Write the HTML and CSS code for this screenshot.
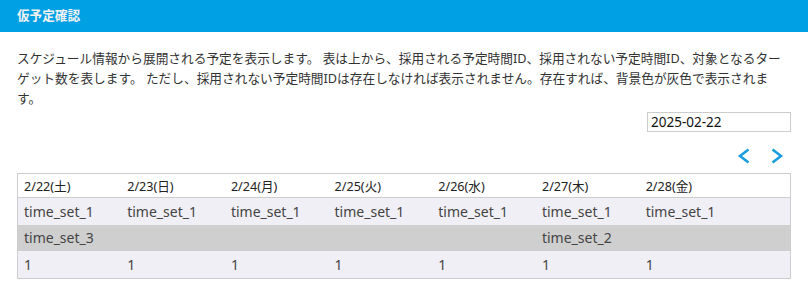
FILE: index.html
```html
<!DOCTYPE html>
<html lang="ja">
  <head>
    <meta charset="UTF-8" />
    <meta name="viewport" content="width=device-width, initial-scale=1.0" />
    <title>仮予定確認</title>
    <link rel="stylesheet" href="styles.css">
  </head>
  <body>
    <div class="panel-header">仮予定確認</div>
    <div class="panel-body">
      <p class="description">スケジュール情報から展開される予定を表示します。 表は上から、採用される予定時間ID、採用されない予定時間ID、対象となるターゲット数を表します。 ただし、採用されない予定時間IDは存在しなければ表示されません。存在すれば、背景色が灰色で表示されます。</p>
      <div class="date-row">
        <input class="date-input" type="text" value="2025-02-22" />
      </div>
      <div class="nav-row">
        <button class="nav-btn" aria-label="前へ">
          <svg width="24" height="24" viewBox="0 0 24 24"><polyline points="16.5,5.5 8,12 16.5,18.5" /></svg>
        </button>
        <button class="nav-btn" aria-label="次へ">
          <svg width="24" height="24" viewBox="0 0 24 24"><polyline points="7.5,5.5 16,12 7.5,18.5" /></svg>
        </button>
      </div>
      <table class="schedule-table">
        <colgroup>
          <col class="day-col" />
          <col class="day-col" />
          <col class="day-col" />
          <col class="day-col" />
          <col class="day-col" />
          <col class="day-col" />
          <col class="day-col" />
          <col />
        </colgroup>
        <thead>
          <tr>
            <th>2/22(土)</th>
            <th>2/23(日)</th>
            <th>2/24(月)</th>
            <th>2/25(火)</th>
            <th>2/26(水)</th>
            <th>2/27(木)</th>
            <th>2/28(金)</th>
            <th></th>
          </tr>
        </thead>
        <tbody>
          <tr>
            <td>time_set_1</td>
            <td>time_set_1</td>
            <td>time_set_1</td>
            <td>time_set_1</td>
            <td>time_set_1</td>
            <td>time_set_1</td>
            <td>time_set_1</td>
            <td></td>
          </tr>
          <tr class="unused-row">
            <td>time_set_3</td>
            <td></td>
            <td></td>
            <td></td>
            <td></td>
            <td>time_set_2</td>
            <td></td>
            <td></td>
          </tr>
          <tr>
            <td>1</td>
            <td>1</td>
            <td>1</td>
            <td>1</td>
            <td>1</td>
            <td>1</td>
            <td>1</td>
            <td></td>
          </tr>
        </tbody>
      </table>
    </div>
  </body>
</html>
```

FILE: styles.css
```css
body {
  margin: 0;
  font-family: "Noto Sans", "Noto Sans CJK JP", sans-serif;
  color: #333;
  background-color: #fff;
}
.panel-header {
  height: 32px;
  padding-left: 17px;
  background-color: #00a0e4;
  color: #f2f2f2;
  font-size: 12.6px;
  font-weight: bold;
  line-height: 32px;
}
.panel-body {
  padding: 0 17px;
}
.description {
  margin: 16px 0 0;
  font-size: 12.7px;
  line-height: 20px;
  line-break: strict;
}
.date-row {
  display: flex;
  justify-content: flex-end;
  margin-top: 4px;
}
.date-input {
  box-sizing: border-box;
  width: 144px;
  height: 20px;
  padding: 0 3px;
  border: 1px solid #ccc;
  font-family: "Noto Sans", "Noto Sans CJK JP", sans-serif;
  font-size: 13.5px;
  color: #111;
  outline: none;
}
.nav-row {
  display: flex;
  justify-content: flex-end;
  gap: 9px;
  margin-top: 12px;
  padding-right: 2px;
}
.nav-btn {
  display: flex;
  width: 24px;
  height: 24px;
  padding: 0;
  border: none;
  background-color: transparent;
}
.nav-btn polyline {
  fill: none;
  stroke: #1a9cde;
  stroke-width: 2.6;
}
.schedule-table {
  width: 100%;
  margin-top: 5px;
  border: 1px solid #ccc;
  border-collapse: collapse;
  table-layout: fixed;
}
.day-col {
  width: 103.7px;
}
.schedule-table th {
  height: 23px;
  padding: 0 6px;
  border-bottom: 1px solid #ccc;
  background-color: #fff;
  color: #222;
  font-size: 12.6px;
  font-weight: normal;
  text-align: left;
}
.schedule-table td {
  height: 26.5px;
  padding: 0 6px;
  background-color: #f0eff5;
  color: #444;
  font-size: 14px;
  white-space: nowrap;
}
.schedule-table .unused-row td {
  background-color: #cfcfcf;
}
```
